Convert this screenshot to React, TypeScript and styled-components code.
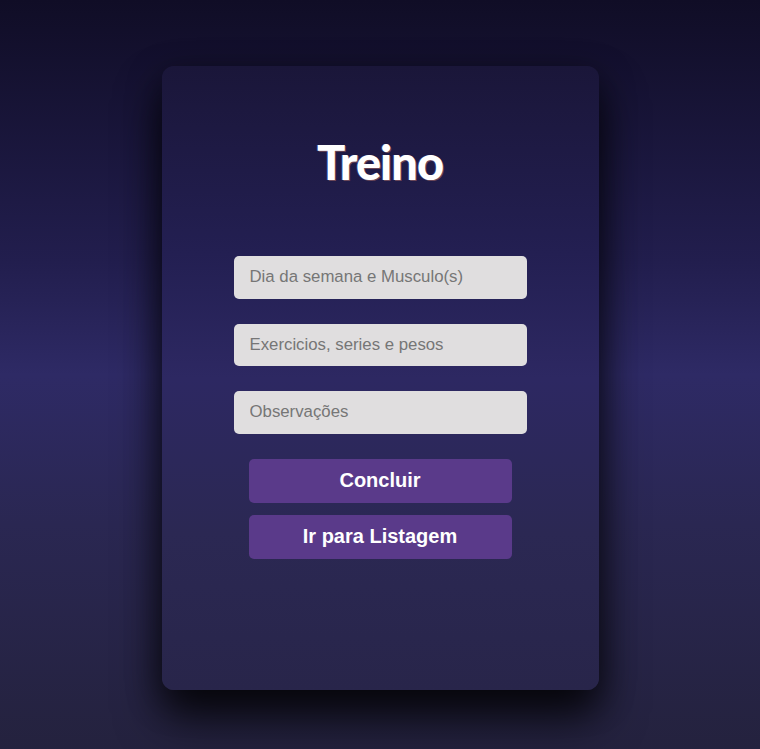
import React from "react";
import styled, { createGlobalStyle } from "styled-components";

const Global = createGlobalStyle`
  html, body { margin: 0; padding: 0; }
  body {
    min-height: 749px;
    background: linear-gradient(180deg, #100d26 0%, #221e4e 35%, #2e2a65 50%, #2a2752 70%, #24223e 100%);
    font-family: "Liberation Sans", Arial, sans-serif;
  }
`;

const Page = styled.div`
  min-height: 749px;
  display: flex;
  justify-content: center;
  padding-top: 66px;
  box-sizing: border-box;
`;

const Card = styled.div`
  width: 437px;
  height: 624px;
  border-radius: 12px;
  background: linear-gradient(180deg, #1a1639 0%, #231f52 30%, #2d2862 50%, #2b2853 75%, #28254a 100%);
  box-shadow: 0 28px 45px rgba(0, 0, 0, 0.75), 0 10px 35px rgba(0, 0, 0, 0.45);
  display: flex;
  flex-direction: column;
  align-items: center;
  box-sizing: border-box;
  padding-top: 68px;
`;

const Title = styled.h1`
  margin: 0 0 66px;
  font-family: "Lato", "Inter", sans-serif;
  font-weight: 900;
  font-size: 47px;
  line-height: 56px;
  letter-spacing: -1px;
  color: #ffffff;
  text-shadow: 1px 1px 0 rgba(255, 160, 120, 0.35), -1px 0 0 rgba(120, 160, 255, 0.25);
`;

const Form = styled.form`
  display: flex;
  flex-direction: column;
  align-items: center;
  gap: 25px;
`;

const Field = styled.input`
  width: 293px;
  height: 42.5px;
  box-sizing: border-box;
  border: none;
  border-radius: 5px;
  background: #e0dedf;
  padding: 0 16px;
  font-family: "Liberation Sans", Arial, sans-serif;
  font-size: 16.8px;
  color: #333;
  outline: none;
  &::placeholder { color: #767676; }
`;

const Buttons = styled.div`
  display: flex;
  flex-direction: column;
  gap: 12px;
`;

const Button = styled.button`
  width: 263px;
  height: 44px;
  border: none;
  border-radius: 5px;
  background: #5a3a8a;
  color: #ffffff;
  font-family: "Liberation Sans", Arial, sans-serif;
  font-weight: 700;
  font-size: 20px;
  cursor: pointer;
`;

export default function App() {
  return (
    <>
      <Global />
      <Page>
        <Card>
          <Title>Treino</Title>
          <Form onSubmit={(e) => e.preventDefault()}>
            <Field placeholder="Dia da semana e Musculo(s)" />
            <Field placeholder="Exercicios, series e pesos" />
            <Field placeholder="Observações" />
            <Buttons>
              <Button type="submit">Concluir</Button>
              <Button type="button">Ir para Listagem</Button>
            </Buttons>
          </Form>
        </Card>
      </Page>
    </>
  );
}
